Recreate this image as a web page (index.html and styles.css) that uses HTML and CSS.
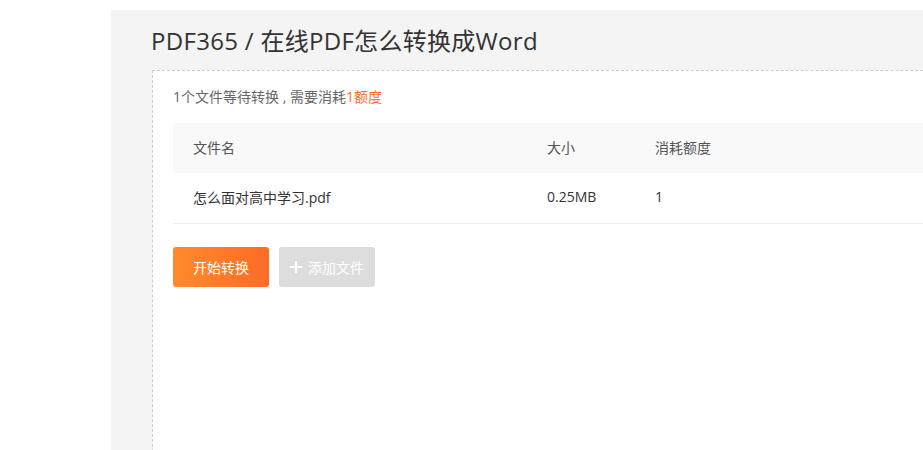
FILE: index.html
```html
<!DOCTYPE html>
<html lang="zh">
<head>
<meta charset="utf-8">
<link rel="stylesheet" href="styles.css">
</head>
<body>
<div class="panel">
  <h1 class="title">PDF365 / 在线PDF怎么转换成Word</h1>
  <div class="box">
    <p class="info">1个文件等待转换 , 需要消耗<span class="hl">1额度</span></p>
    <div class="table">
      <div class="row head">
        <div class="c1">文件名</div>
        <div class="c2">大小</div>
        <div class="c3">消耗额度</div>
      </div>
      <div class="row body">
        <div class="c1">怎么面对高中学习.pdf</div>
        <div class="c2">0.25MB</div>
        <div class="c3">1</div>
      </div>
    </div>
    <div class="actions">
      <button class="btn primary">开始转换</button>
      <button class="btn disabled"><svg class="plus" width="12" height="12" viewBox="0 0 12 12"><path d="M6 0v12M0 6h12" stroke="#fff" stroke-width="2"/></svg>添加文件</button>
    </div>
  </div>
</div>
</body>
</html>
```
FILE: styles.css
```css
html, body {
  margin: 0;
  padding: 0;
  background: #fff;
  overflow: hidden;
  height: 450px;
}
body {
  font-family: "Open Sans", "Noto Sans CJK SC", sans-serif;
  color: #333;
}
.panel {
  margin: 10px 0 0 111px;
  background: #f4f4f4;
  padding: 0 0 0 41px;
  height: 440px;
}
.title {
  margin: 0;
  font-weight: normal;
  font-size: 24px;
  line-height: 62px;
  height: 60px;
  color: #333;
  letter-spacing: 0.3px;
  text-indent: -1px;
}
.box {
  background: #fff;
  border: 1px dashed #ccc;
  border-right: none;
  width: 900px;
  height: 400px;
  padding-left: 20px;
}
.info {
  margin: 16px 0 16px;
  font-size: 14px;
  line-height: 20px;
  color: #666;
}
.hl { color: #ff6a2a; }
.table {
  font-size: 14px;
  color: #333;
}
.row {
  display: flex;
  height: 50px;
  align-items: center;
  padding-bottom: 3px;
  box-sizing: border-box;
}
.row.head { background: #f9f9f9; color: #555; }
.row.body { border-bottom: 1px solid #eee; height: 51px; }
.c1 { width: 354px; padding-left: 20px; }
.c2 { width: 108px; }
.c3 { flex: 1; }
.actions {
  display: flex;
  gap: 10px;
  margin-top: 23px;
}
.btn {
  width: 96px;
  height: 40px;
  border: none;
  border-radius: 3px;
  font-family: "Open Sans", "Noto Sans CJK SC", sans-serif;
  font-size: 14px;
  color: #fff;
  padding: 0;
  display: flex;
  align-items: center;
  justify-content: center;
}
.primary {
  background: linear-gradient(90deg, #ff8a2b, #ff6b27);
}
.disabled {
  background: #ddd;
}
.plus { margin-right: 6px; }
```
